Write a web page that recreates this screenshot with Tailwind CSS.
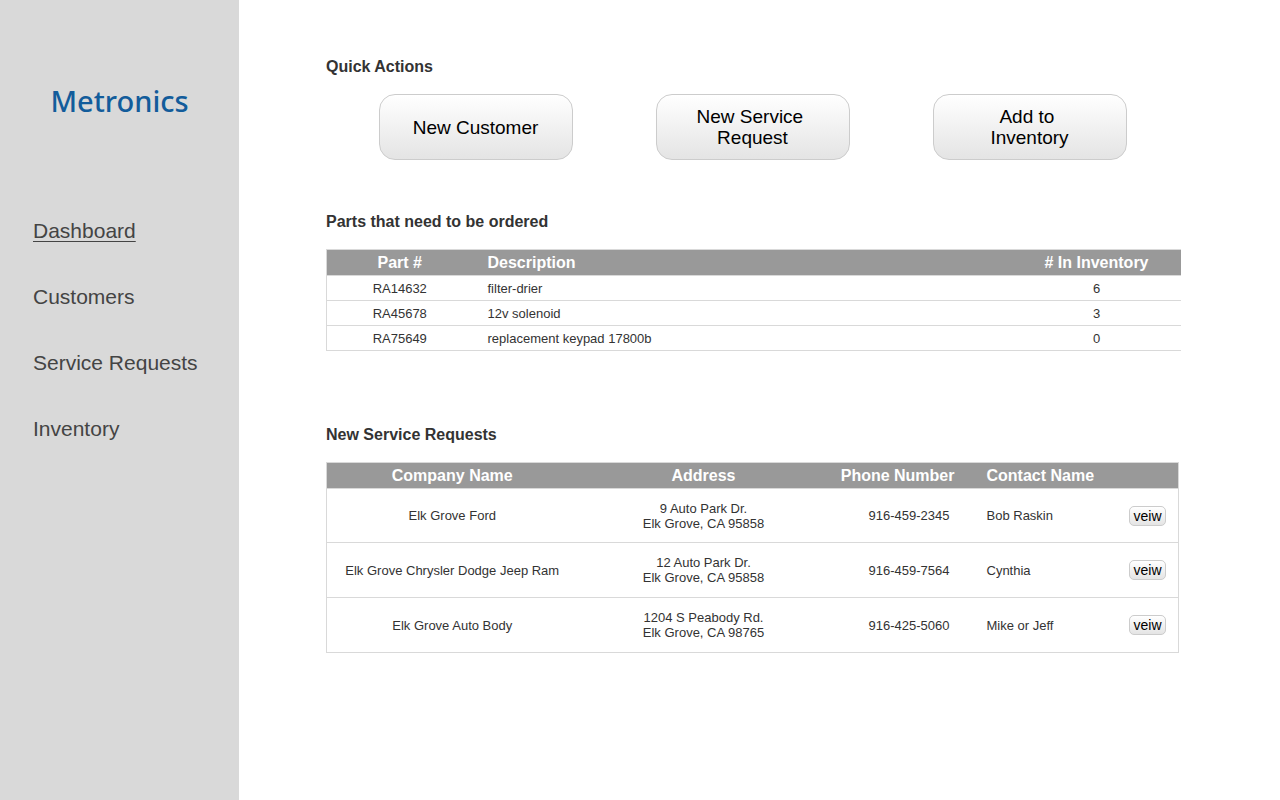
<!DOCTYPE html>
<html lang="en">
<head>
<meta charset="utf-8">
<meta name="viewport" content="width=device-width, initial-scale=1">
<title>Metronics Dashboard</title>
<script src="https://cdn.jsdelivr.net/npm/@tailwindcss/browser@4"></script>
</head>
<body class="flex min-h-screen bg-white font-['Liberation_Sans',Arial,sans-serif] text-[13px] leading-[15px] text-[#333333]">
  <aside class="w-[239px] shrink-0 bg-[#d9d9d9] pt-20">
    <div class="text-center font-['Noto_Sans',sans-serif] text-[29px] leading-[42px] font-medium text-[#125c9b]">Metronics</div>
    <nav class="mt-24 flex flex-col items-start gap-10 pl-[33px] text-[21px] leading-[26px] text-[#444444]">
      <a href="#" class="underline decoration-1 underline-offset-3">Dashboard</a>
      <a href="#">Customers</a>
      <a href="#">Service Requests</a>
      <a href="#">Inventory</a>
    </nav>
  </aside>
  <main class="min-w-0 grow pt-[57px] pr-[99px] pl-[87px]">
    <section>
      <h2 class="text-[16px] leading-5 font-bold">Quick Actions</h2>
      <div class="mt-[17px] grid grid-cols-3 justify-items-center pr-[13px] pl-[11px] text-[19px] leading-[21px] text-black">
        <button class="h-[66px] w-[194px] rounded-[16px] border border-[#cccccc] bg-linear-to-b from-white to-[#e4e4e4] px-8">New Customer</button>
        <button class="h-[66px] w-[194px] rounded-[16px] border border-[#cccccc] bg-linear-to-b from-white to-[#e4e4e4] px-8">New Service&nbsp;<br>Request</button>
        <button class="h-[66px] w-[194px] rounded-[16px] border border-[#cccccc] bg-linear-to-b from-white to-[#e4e4e4] px-8">Add to&nbsp;<br>Inventory</button>
      </div>
    </section>
    <section class="mt-[52px]">
      <h2 class="text-[16px] leading-5 font-bold">Parts that need to be ordered</h2>
      <table class="mt-[17px] w-full table-fixed border-collapse border-y border-l border-[#d9d9d9] text-center">
        <colgroup><col class="w-[146px]"><col><col class="w-[169px]"></colgroup>
        <thead class="bg-[#999999] text-[16px] text-white">
          <tr class="h-[26px] border-b border-[#d9d9d9]"><th>Part #</th><th class="pl-[15px] text-left">Description</th><th>#&nbsp;In Inventory</th></tr>
        </thead>
        <tbody>
          <tr class="h-[25px] border-b border-[#d9d9d9]"><td>RA14632</td><td class="pl-[15px] text-left">filter-drier</td><td>6</td></tr>
          <tr class="h-[25px] border-b border-[#d9d9d9]"><td>RA45678</td><td class="pl-[15px] text-left">12v solenoid</td><td>3</td></tr>
          <tr class="h-[25px] border-b border-[#d9d9d9]"><td>RA75649</td><td class="pl-[15px] text-left">replacement keypad 17800b</td><td>0</td></tr>
        </tbody>
      </table>
    </section>
    <section class="mt-[74px] pr-[2px]">
      <h2 class="text-[16px] leading-5 font-bold">New Service Requests</h2>
      <table class="mt-[17px] w-full table-fixed border-collapse border border-[#d9d9d9] text-center">
        <colgroup><col><col class="w-[252px]"><col class="w-[142px]"><col class="w-[140px]"><col class="w-[67px]"></colgroup>
        <thead class="bg-[#999999] text-[16px] text-white">
          <tr class="h-[26px] border-b border-[#d9d9d9]"><th>Company Name</th><th>Address</th><th class="pr-[17px] text-right whitespace-nowrap">Phone Number</th><th class="pl-[15px] text-left">Contact Name</th><td></td></tr>
        </thead>
        <tbody>
          <tr class="h-[54px] border-b border-[#d9d9d9]"><td>Elk Grove Ford</td><td>9 Auto Park Dr.<br>Elk Grove, CA 95858</td><td class="pr-[22px] text-right">916-459-2345</td><td class="pl-[15px] text-left">Bob Raskin</td><td class="pr-3"><button class="ml-auto block h-5 w-[37px] rounded-[5px] border border-[#cccccc] bg-linear-to-b from-white to-[#e4e4e4] text-[14px] leading-4 text-black">veiw</button></td></tr>
          <tr class="h-[55px] border-b border-[#d9d9d9]"><td>Elk Grove Chrysler Dodge Jeep Ram</td><td>12 Auto Park Dr.<br>Elk Grove, CA 95858</td><td class="pr-[22px] text-right">916-459-7564</td><td class="pl-[15px] text-left">Cynthia</td><td class="pr-3"><button class="ml-auto block h-5 w-[37px] rounded-[5px] border border-[#cccccc] bg-linear-to-b from-white to-[#e4e4e4] text-[14px] leading-4 text-black">veiw</button></td></tr>
          <tr class="h-[55px] border-b border-[#d9d9d9]"><td>Elk Grove Auto Body</td><td>1204 S Peabody Rd.<br>Elk Grove, CA 98765</td><td class="pr-[22px] text-right">916-425-5060</td><td class="pl-[15px] text-left">Mike or Jeff</td><td class="pr-3"><button class="ml-auto block h-5 w-[37px] rounded-[5px] border border-[#cccccc] bg-linear-to-b from-white to-[#e4e4e4] text-[14px] leading-4 text-black">veiw</button></td></tr>
        </tbody>
      </table>
    </section>
  </main>
</body>
</html>
